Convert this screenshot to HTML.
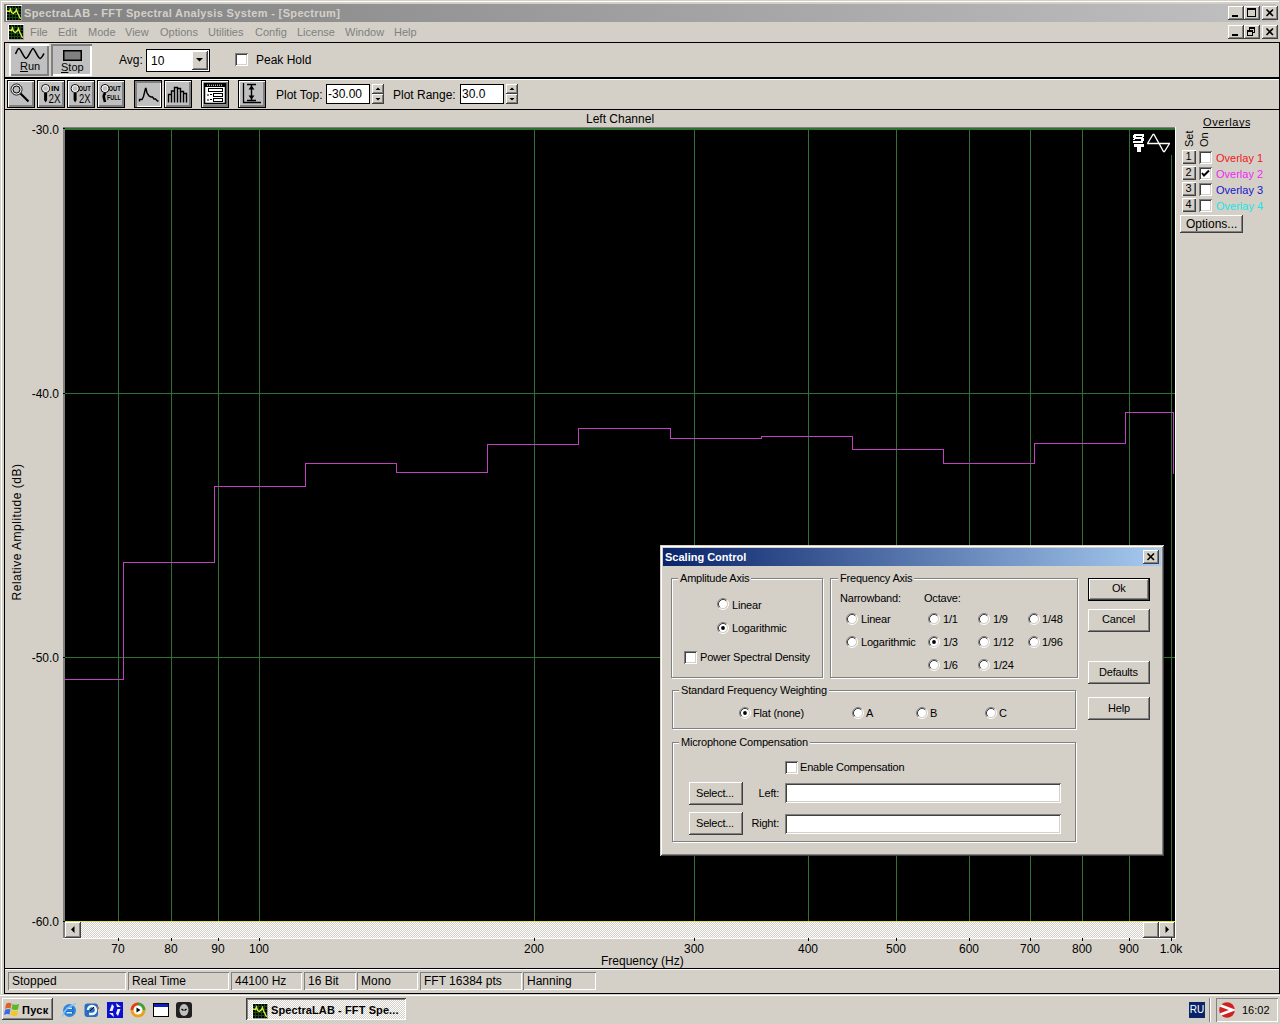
<!DOCTYPE html>
<html><head><meta charset="utf-8"><style>
html,body{margin:0;padding:0}
body{width:1280px;height:1024px;background:#D4D0C8;position:relative;overflow:hidden;font-family:"Liberation Sans",sans-serif;font-size:11px;color:#000}
body>div,body>svg{position:absolute}
.t{position:absolute;white-space:nowrap;font-size:11px;line-height:13px}
</style></head><body>
<div style="left:1px;top:1px;width:1278px;height:1px;background:#fff"></div>
<div style="left:1px;top:1px;width:1px;height:993px;background:#fff"></div>
<div style="left:4px;top:4px;width:1272px;height:18px;background:linear-gradient(90deg,#808080,#C0C0C0)"></div>
<svg style="left:6px;top:5px" width="16" height="16" viewBox="0 0 16 16"><rect x="0" y="0" width="16" height="16" fill="#a0a0a0"/><path d="M0.5 16 V0.5 H16" stroke="#fff" stroke-width="1" fill="none"/><rect x="1" y="1" width="14" height="14" fill="#000"/><path d="M1 3.5H15M1 6.5H15M1 9.5H15M1 12.5H15M3.5 1V15M6.5 1V15M9.5 1V15M12.5 1V15" stroke="#124c12" stroke-width="1"/><path d="M1 6 L3.5 6.5 L4.5 4 L5.5 7.5 L7.5 8.5 L9.5 6.5 L10.5 4.5 L11.5 8 L13 10.5 L14.5 14" stroke="#e0f040" stroke-width="1.3" fill="none"/></svg>
<div class="t" style="left:24px;top:7px;font-weight:bold;color:#D4D0C8;letter-spacing:0.35px">SpectraLAB - FFT Spectral Analysis System - [Spectrum]</div>
<div style="left:1228px;top:6px;width:16px;height:14px;background:#D4D0C8;box-shadow:inset -1px -1px #404040,inset 1px 1px #fff,inset -2px -2px #808080;"></div>
<div style="left:1232px;top:15px;width:6px;height:2px;background:#000"></div>
<div style="left:1244px;top:6px;width:16px;height:14px;background:#D4D0C8;box-shadow:inset -1px -1px #404040,inset 1px 1px #fff,inset -2px -2px #808080;"></div>
<div style="left:1247px;top:8px;width:9px;height:9px;border:1px solid #000;border-top-width:2px;box-sizing:border-box"></div>
<div style="left:1262px;top:6px;width:16px;height:14px;background:#D4D0C8;box-shadow:inset -1px -1px #404040,inset 1px 1px #fff,inset -2px -2px #808080;"></div>
<svg style="left:1262px;top:6px" width="16" height="14"><path d="M4.5 3.5 L11 10 M11 3.5 L4.5 10" stroke="#000" stroke-width="1.6"/></svg>
<svg style="left:8px;top:24px" width="16" height="16" viewBox="0 0 16 16"><rect x="0" y="0" width="16" height="16" fill="#a0a0a0"/><path d="M0.5 16 V0.5 H16" stroke="#fff" stroke-width="1" fill="none"/><rect x="1" y="1" width="14" height="14" fill="#000"/><path d="M1 3.5H15M1 6.5H15M1 9.5H15M1 12.5H15M3.5 1V15M6.5 1V15M9.5 1V15M12.5 1V15" stroke="#124c12" stroke-width="1"/><path d="M1 6 L3.5 6.5 L4.5 4 L5.5 7.5 L7.5 8.5 L9.5 6.5 L10.5 4.5 L11.5 8 L13 10.5 L14.5 14" stroke="#e0f040" stroke-width="1.3" fill="none"/></svg>
<div class="t" style="left:30px;top:26px;color:#808080">File</div>
<div class="t" style="left:58px;top:26px;color:#808080">Edit</div>
<div class="t" style="left:88px;top:26px;color:#808080">Mode</div>
<div class="t" style="left:125px;top:26px;color:#808080">View</div>
<div class="t" style="left:160px;top:26px;color:#808080">Options</div>
<div class="t" style="left:208px;top:26px;color:#808080">Utilities</div>
<div class="t" style="left:255px;top:26px;color:#808080">Config</div>
<div class="t" style="left:297px;top:26px;color:#808080">License</div>
<div class="t" style="left:345px;top:26px;color:#808080">Window</div>
<div class="t" style="left:394px;top:26px;color:#808080">Help</div>
<div style="left:1228px;top:25px;width:16px;height:14px;background:#D4D0C8;box-shadow:inset -1px -1px #404040,inset 1px 1px #fff,inset -2px -2px #808080;"></div>
<div style="left:1232px;top:34px;width:6px;height:2px;background:#000"></div>
<div style="left:1244px;top:25px;width:16px;height:14px;background:#D4D0C8;box-shadow:inset -1px -1px #404040,inset 1px 1px #fff,inset -2px -2px #808080;"></div>
<div style="left:1249px;top:27px;width:6px;height:6px;border:1px solid #000;border-top-width:2px;box-sizing:border-box"></div>
<div style="left:1247px;top:30px;width:6px;height:6px;border:1px solid #000;border-top-width:2px;box-sizing:border-box;background:#D4D0C8"></div>
<div style="left:1262px;top:25px;width:16px;height:14px;background:#D4D0C8;box-shadow:inset -1px -1px #404040,inset 1px 1px #fff,inset -2px -2px #808080;"></div>
<svg style="left:1262px;top:25px" width="16" height="14"><path d="M4.5 3.5 L11 10 M11 3.5 L4.5 10" stroke="#000" stroke-width="1.6"/></svg>
<div style="left:4px;top:42px;width:1276px;height:1px;background:#000"></div>
<div style="left:4px;top:42px;width:1px;height:952px;background:#000"></div>
<div style="left:1279px;top:42px;width:1px;height:952px;background:#000"></div>
<div style="left:4px;top:77px;width:1276px;height:1px;background:#000"></div>
<div style="left:4px;top:78px;width:1276px;height:1px;background:#000"></div>
<div style="left:4px;top:109px;width:1276px;height:1px;background:#000"></div>
<div style="left:4px;top:968px;width:1276px;height:1px;background:#000"></div>
<div style="left:4px;top:993px;width:1276px;height:1px;background:#000"></div>
<div style="left:5px;top:79px;width:1274px;height:1px;background:#fff"></div>
<div style="left:5px;top:969px;width:1274px;height:1px;background:#fff"></div>
<div style="left:9px;top:44px;width:40px;height:32px;background:#C0C0C0;box-shadow:inset 2px 2px #fff,inset -2px -2px #808080"></div>
<svg style="left:0;top:0" width="60" height="70"><path d="M15.5 54 C16.5 52 17.5 48.5 19 48.5 C20.5 48.5 24 58.5 26 58.5 C28 58.5 31.5 48.5 33 48.5 C34.5 48.5 38 58.5 40 58.5 C41.5 58.5 43 55 44 53.5" stroke="#000" stroke-width="1.5" fill="none"/></svg>
<div class="t" style="left:20px;top:60px;font-size:11px"><u>R</u>un</div>
<div style="left:51px;top:44px;width:41px;height:32px;background:#C0C0C0;box-shadow:inset 2px 2px #808080,inset -2px -2px #fff"></div>
<div style="left:63px;top:50px;width:19px;height:11px;background:#808080;border:1px solid #000;box-sizing:border-box;box-shadow:inset 0 0 0 0.5px #000"></div>
<div class="t" style="left:61px;top:61px;"><u>S</u>top</div>
<div class="t" style="left:119px;top:53px;font-size:12px;line-height:14px">Avg:</div>
<div style="left:146px;top:49px;width:64px;height:23px;background:#fff;border:1px solid #000;box-sizing:border-box"></div>
<div class="t" style="left:151px;top:54px;font-size:12px;line-height:14px">10</div>
<div style="left:192px;top:51px;width:16px;height:19px;background:#D4D0C8;box-shadow:inset -1px -1px #404040,inset 1px 1px #fff,inset -2px -2px #808080;"></div>
<svg style="left:192px;top:51px" width="16" height="19"><path d="M4 7 L11 7 L7.5 10.5 Z" fill="#000"/></svg>
<div style="left:235px;top:53px;width:13px;height:13px;background:#fff;box-shadow:inset 1px 1px #808080,inset -1px -1px #fff,inset 2px 2px #404040,inset -2px -2px #D4D0C8;"></div>
<div class="t" style="left:256px;top:53px;font-size:12px;line-height:14px">Peak Hold</div>
<div style="left:7px;top:80px;width:28px;height:28px;background:#000"></div>
<div style="left:8px;top:81px;width:26px;height:26px;background:#C0C0C0;box-shadow:inset 1px 1px #fff,inset -2px -2px #808080"></div>
<div style="left:37px;top:80px;width:28px;height:28px;background:#000"></div>
<div style="left:38px;top:81px;width:26px;height:26px;background:#C0C0C0;box-shadow:inset 1px 1px #fff,inset -2px -2px #808080"></div>
<div style="left:67px;top:80px;width:28px;height:28px;background:#000"></div>
<div style="left:68px;top:81px;width:26px;height:26px;background:#C0C0C0;box-shadow:inset 1px 1px #fff,inset -2px -2px #808080"></div>
<div style="left:97px;top:80px;width:28px;height:28px;background:#000"></div>
<div style="left:98px;top:81px;width:26px;height:26px;background:#C0C0C0;box-shadow:inset 1px 1px #fff,inset -2px -2px #808080"></div>
<div style="left:134px;top:80px;width:28px;height:28px;background:#000"></div>
<div style="left:135px;top:81px;width:26px;height:26px;background:#C0C0C0;box-shadow:inset 2px 2px #808080,inset -1px -1px #fff"></div>
<div style="left:164px;top:80px;width:28px;height:28px;background:#000"></div>
<div style="left:165px;top:81px;width:26px;height:26px;background:#C0C0C0;box-shadow:inset 1px 1px #fff,inset -2px -2px #808080"></div>
<div style="left:201px;top:80px;width:28px;height:28px;background:#000"></div>
<div style="left:202px;top:81px;width:26px;height:26px;background:#C0C0C0;box-shadow:inset 1px 1px #fff,inset -2px -2px #808080"></div>
<div style="left:238px;top:80px;width:28px;height:28px;background:#000"></div>
<div style="left:239px;top:81px;width:26px;height:26px;background:#C0C0C0;box-shadow:inset 1px 1px #fff,inset -2px -2px #808080"></div>
<svg style="left:7px;top:80px" width="28" height="28"><circle cx="9.5" cy="9.5" r="5.5" stroke="#000" stroke-width="1" fill="none"/><circle cx="9.5" cy="9.5" r="4.5" stroke="#fff" stroke-width="1" fill="none"/><circle cx="9.5" cy="9.5" r="3.5" stroke="#000" stroke-width="1" fill="none"/><path d="M13.5 13.5 L21.5 21.5" stroke="#000" stroke-width="2.2"/></svg>
<svg style="left:37px;top:80px" width="28" height="28"><circle cx="8.6" cy="8.5" r="4" stroke="#000" stroke-width="1" fill="none"/><circle cx="8.6" cy="8.5" r="3" stroke="#fff" stroke-width="1" fill="none"/><path d="M7.1 13 H10.1 V20 L8.6 22.5 L7.1 20Z" fill="#000"/><text x="11.5" y="23" font-family="Liberation Sans" font-size="12" textLength="12" lengthAdjust="spacingAndGlyphs">2X</text><text x="14" y="10.8" font-family="Liberation Sans" font-weight="bold" font-size="7" textLength="8.5" lengthAdjust="spacingAndGlyphs">IN</text></svg>
<svg style="left:67px;top:80px" width="28" height="28"><circle cx="8.1" cy="8.5" r="4" stroke="#000" stroke-width="1" fill="none"/><circle cx="8.1" cy="8.5" r="3" stroke="#fff" stroke-width="1" fill="none"/><path d="M6.6 13 H9.6 V20 L8.1 22.5 L6.6 20Z" fill="#000"/><text x="12" y="23" font-family="Liberation Sans" font-size="12" textLength="11.5" lengthAdjust="spacingAndGlyphs">2X</text><text x="11.5" y="10.8" font-family="Liberation Sans" font-weight="bold" font-size="7" textLength="12.3" lengthAdjust="spacingAndGlyphs">OUT</text></svg>
<svg style="left:97px;top:80px" width="28" height="28"><circle cx="8" cy="8.5" r="4" stroke="#000" stroke-width="1" fill="none"/><circle cx="8" cy="8.5" r="3" stroke="#fff" stroke-width="1" fill="none"/><path d="M8.5 13 Q6 15 7 18 L8 22" stroke="#000" stroke-width="2.6" fill="none"/><text x="10" y="19.8" font-family="Liberation Sans" font-weight="bold" font-size="7" textLength="13.8" lengthAdjust="spacingAndGlyphs">FULL</text><text x="11.5" y="10.8" font-family="Liberation Sans" font-weight="bold" font-size="7" textLength="12.3" lengthAdjust="spacingAndGlyphs">OUT</text></svg>
<svg style="left:134px;top:80px" width="28" height="28"><path d="M5.5 21.5 V19.5 H8 L9.5 16.5 L11.5 8.5 L12 8.5 L13 13 L15 16 L17 17 H18.5 L20 19 H21.5 L23.5 21 H24.5" stroke="#000" stroke-width="1.4" fill="none"/></svg>
<svg style="left:164px;top:80px" width="28" height="28"><path d="M4.5 22.5 V14.5 H7.5 V11 H10.5 V7.5 H13.5 V8.5 H16.5 V11.5 H19.5 V13.5 H22.5 V22.5 M7.5 14.5 V22.5 M10.5 11 V22.5 M13.5 8.5 V22.5 M16.5 11.5 V22.5 M19.5 13.5 V22.5" stroke="#000" stroke-width="1.4" fill="none"/></svg>
<svg style="left:201px;top:80px" width="28" height="28"><rect x="3.5" y="3.5" width="21" height="20" fill="#fff" stroke="#000" stroke-width="1.5"/><rect x="3.5" y="3.5" width="21" height="3.5" fill="#000"/><path d="M6 5.2 H22" stroke="#fff" stroke-width="1" stroke-dasharray="1 1"/><rect x="7.5" y="8.5" width="14" height="3" fill="none" stroke="#000"/><rect x="12.5" y="13.5" width="9" height="3" fill="none" stroke="#000"/><rect x="12.5" y="18.5" width="9" height="3" fill="none" stroke="#000"/><path d="M6 15 H8 M9 14.5 H11 M6 20 H8 M9 19.5 H11" stroke="#000" stroke-width="1.2"/></svg>
<svg style="left:238px;top:80px" width="28" height="28"><path d="M5.5 3 V22.5 H23" stroke="#000" stroke-width="1.3" fill="none"/><path d="M9 4.5 H18 M9 20.5 H18 M13.5 5 V20" stroke="#000" stroke-width="1.4"/><path d="M10.5 9.5 L13.5 5.5 L16.5 9.5Z M10.5 15.5 L13.5 19.5 L16.5 15.5Z" fill="#000"/></svg>
<div class="t" style="left:276px;top:88px;font-size:12px;line-height:14px">Plot Top:</div>
<div style="left:326px;top:84px;width:44px;height:20px;background:#fff;border:1px solid #000;box-sizing:border-box"></div>
<div class="t" style="left:328px;top:87px;font-size:12px;line-height:14px">-30.00</div>
<div style="left:372px;top:84px;width:12px;height:10px;background:#D4D0C8;box-shadow:inset -1px -1px #404040,inset 1px 1px #fff,inset -2px -2px #808080;"></div>
<div style="left:372px;top:94px;width:12px;height:10px;background:#D4D0C8;box-shadow:inset -1px -1px #404040,inset 1px 1px #fff,inset -2px -2px #808080;"></div>
<svg style="left:372px;top:84px" width="12" height="20"><path d="M3.5 6 L8.5 6 L6 3.5Z M3.5 14 L8.5 14 L6 16.5Z" fill="#000"/></svg>
<div class="t" style="left:393px;top:88px;font-size:12px;line-height:14px">Plot Range:</div>
<div style="left:460px;top:84px;width:44px;height:20px;background:#fff;border:1px solid #000;box-sizing:border-box"></div>
<div class="t" style="left:462px;top:87px;font-size:12px;line-height:14px">30.0</div>
<div style="left:506px;top:84px;width:12px;height:10px;background:#D4D0C8;box-shadow:inset -1px -1px #404040,inset 1px 1px #fff,inset -2px -2px #808080;"></div>
<div style="left:506px;top:94px;width:12px;height:10px;background:#D4D0C8;box-shadow:inset -1px -1px #404040,inset 1px 1px #fff,inset -2px -2px #808080;"></div>
<svg style="left:506px;top:84px" width="12" height="20"><path d="M3.5 6 L8.5 6 L6 3.5Z M3.5 14 L8.5 14 L6 16.5Z" fill="#000"/></svg>
<div style="left:63px;top:127px;width:2px;height:812px;background:#808080"></div>
<div style="left:63px;top:127px;width:1113px;height:1px;background:#808080"></div>
<div style="left:1175px;top:127px;width:1px;height:812px;background:#fff"></div>
<div style="left:63px;top:938px;width:1113px;height:1px;background:#fff"></div>
<div style="left:65px;top:128px;width:1110px;height:793px;background:#000"></div>
<div style="left:118px;top:128px;width:1px;height:793px;background:#307030"></div>
<div style="left:171px;top:128px;width:1px;height:793px;background:#307030"></div>
<div style="left:218px;top:128px;width:1px;height:793px;background:#307030"></div>
<div style="left:259px;top:128px;width:1px;height:793px;background:#307030"></div>
<div style="left:534px;top:128px;width:1px;height:793px;background:#307030"></div>
<div style="left:694px;top:128px;width:1px;height:793px;background:#307030"></div>
<div style="left:808px;top:128px;width:1px;height:793px;background:#307030"></div>
<div style="left:896px;top:128px;width:1px;height:793px;background:#307030"></div>
<div style="left:969px;top:128px;width:1px;height:793px;background:#307030"></div>
<div style="left:1030px;top:128px;width:1px;height:793px;background:#307030"></div>
<div style="left:1082px;top:128px;width:1px;height:793px;background:#307030"></div>
<div style="left:1129px;top:128px;width:1px;height:793px;background:#307030"></div>
<div style="left:1171px;top:128px;width:1px;height:793px;background:#307030"></div>
<div style="left:65px;top:128px;width:1110px;height:1px;background:#307030"></div>
<div style="left:65px;top:129px;width:1110px;height:1px;background:#307030"></div>
<div style="left:65px;top:393px;width:1110px;height:1px;background:#307030"></div>
<div style="left:65px;top:657px;width:1110px;height:1px;background:#307030"></div>
<div style="left:65px;top:921px;width:1110px;height:1px;background:#e0e040"></div>
<div style="left:63px;top:128px;width:2px;height:1px;background:#000"></div>
<div style="left:63px;top:393px;width:2px;height:1px;background:#000"></div>
<div style="left:63px;top:657px;width:2px;height:1px;background:#000"></div>
<div style="left:63px;top:921px;width:2px;height:1px;background:#000"></div>
<div style="left:118px;top:938px;width:1px;height:3px;background:#000"></div>
<div style="left:171px;top:938px;width:1px;height:3px;background:#000"></div>
<div style="left:218px;top:938px;width:1px;height:3px;background:#000"></div>
<div style="left:259px;top:938px;width:1px;height:3px;background:#000"></div>
<div style="left:534px;top:938px;width:1px;height:3px;background:#000"></div>
<div style="left:694px;top:938px;width:1px;height:3px;background:#000"></div>
<div style="left:808px;top:938px;width:1px;height:3px;background:#000"></div>
<div style="left:896px;top:938px;width:1px;height:3px;background:#000"></div>
<div style="left:969px;top:938px;width:1px;height:3px;background:#000"></div>
<div style="left:1030px;top:938px;width:1px;height:3px;background:#000"></div>
<div style="left:1082px;top:938px;width:1px;height:3px;background:#000"></div>
<div style="left:1129px;top:938px;width:1px;height:3px;background:#000"></div>
<div style="left:1171px;top:938px;width:1px;height:3px;background:#000"></div>
<div style="left:65px;top:922px;width:1110px;height:16px;background-color:#D4D0C8;background-image:repeating-conic-gradient(#fff 0 25%,#D4D0C8 0 50%);background-size:2px 2px"></div>
<div style="left:65px;top:922px;width:16px;height:16px;background:#D4D0C8;box-shadow:inset -1px -1px #404040,inset 1px 1px #fff,inset -2px -2px #808080;"></div>
<svg style="left:65px;top:922px" width="16" height="16"><path d="M9.5 4 L9.5 11 L6 7.5Z" fill="#000"/></svg>
<div style="left:1143px;top:922px;width:16px;height:16px;background:#D4D0C8;box-shadow:inset -1px -1px #404040,inset 1px 1px #fff,inset -2px -2px #808080;"></div>
<div style="left:1159px;top:922px;width:16px;height:16px;background:#D4D0C8;box-shadow:inset -1px -1px #404040,inset 1px 1px #fff,inset -2px -2px #808080;"></div>
<svg style="left:1159px;top:922px" width="16" height="16"><path d="M6.5 4 L6.5 11 L10 7.5Z" fill="#000"/></svg>
<svg style="left:0;top:0" width="1280" height="1024"><path d="M65 679.5 L123.5 679.5 L123.5 562.5 L214.5 562.5 L214.5 486.5 L305.5 486.5 L305.5 463.5 L396.5 463.5 L396.5 472.5 L487.5 472.5 L487.5 444.5 L578.5 444.5 L578.5 428.5 L670.5 428.5 L670.5 438.5 L761.5 438.5 L761.5 436.5 L852.5 436.5 L852.5 449.5 L943.5 449.5 L943.5 463.5 L1034.5 463.5 L1034.5 443.5 L1125.5 443.5 L1125.5 412.5 L1173.5 412.5 L1173.5 474" stroke="#c040c0" stroke-width="1" fill="none" shape-rendering="crispEdges"/></svg>
<div style="left:1130px;top:130px;width:45px;height:25px;background:#000"></div>
<div style="left:1134px;top:134px;width:10px;height:2px;background:#fff"></div>
<div style="left:1133px;top:135px;width:3px;height:3px;background:#fff"></div>
<div style="left:1134px;top:137px;width:9px;height:2px;background:#fff"></div>
<div style="left:1141px;top:138px;width:3px;height:3px;background:#fff"></div>
<div style="left:1133px;top:141px;width:10px;height:2px;background:#fff"></div>
<div style="left:1142px;top:136px;width:2px;height:1px;background:#fff"></div>
<div style="left:1133px;top:139px;width:2px;height:1px;background:#fff"></div>
<div style="left:1134px;top:144px;width:10px;height:3px;background:#fff"></div>
<div style="left:1137px;top:147px;width:4px;height:5px;background:#fff"></div>
<svg style="left:0;top:0" width="1280" height="200"><path d="M1147 143.5 H1170 M1147.5 143.5 L1153 134.5 L1154 134.5 L1163.5 151.5 L1164.5 151.5 L1169.5 143.5" stroke="#fff" stroke-width="1.3" fill="none"/></svg>
<div class="t" style="left:20px;width:39px;text-align:right;top:123px;font-size:12px;line-height:14px">-30.0</div>
<div class="t" style="left:20px;width:39px;text-align:right;top:387px;font-size:12px;line-height:14px">-40.0</div>
<div class="t" style="left:20px;width:39px;text-align:right;top:651px;font-size:12px;line-height:14px">-50.0</div>
<div class="t" style="left:20px;width:39px;text-align:right;top:915px;font-size:12px;line-height:14px">-60.0</div>
<div class="t" style="left:88px;width:60px;text-align:center;top:942px;font-size:12px;line-height:14px">70</div>
<div class="t" style="left:141px;width:60px;text-align:center;top:942px;font-size:12px;line-height:14px">80</div>
<div class="t" style="left:188px;width:60px;text-align:center;top:942px;font-size:12px;line-height:14px">90</div>
<div class="t" style="left:229px;width:60px;text-align:center;top:942px;font-size:12px;line-height:14px">100</div>
<div class="t" style="left:504px;width:60px;text-align:center;top:942px;font-size:12px;line-height:14px">200</div>
<div class="t" style="left:664px;width:60px;text-align:center;top:942px;font-size:12px;line-height:14px">300</div>
<div class="t" style="left:778px;width:60px;text-align:center;top:942px;font-size:12px;line-height:14px">400</div>
<div class="t" style="left:866px;width:60px;text-align:center;top:942px;font-size:12px;line-height:14px">500</div>
<div class="t" style="left:939px;width:60px;text-align:center;top:942px;font-size:12px;line-height:14px">600</div>
<div class="t" style="left:1000px;width:60px;text-align:center;top:942px;font-size:12px;line-height:14px">700</div>
<div class="t" style="left:1052px;width:60px;text-align:center;top:942px;font-size:12px;line-height:14px">800</div>
<div class="t" style="left:1099px;width:60px;text-align:center;top:942px;font-size:12px;line-height:14px">900</div>
<div class="t" style="left:1141px;width:60px;text-align:center;top:942px;font-size:12px;line-height:14px">1.0k</div>
<div class="t" style="left:586px;top:112px;font-size:12px;line-height:14px">Left Channel</div>
<div class="t" style="left:601px;top:954px;font-size:12px;line-height:14px">Frequency (Hz)</div>
<div class="t" style="left:17px;top:532px;font-size:12px;letter-spacing:0.5px;transform:translate(-50%,-50%) rotate(-90deg);transform-origin:center">Relative Amplitude (dB)</div>
<div class="t" style="left:1203px;top:116px;letter-spacing:0.6px">Overlays</div>
<div style="left:1203px;top:127px;width:47px;height:1px;background:#000"></div>
<div class="t" style="left:1184px;top:131px;width:13px;height:16px"><div style="position:absolute;left:0;top:0;transform:translate(-1px,16px) rotate(-90deg);transform-origin:0 0">Set</div></div>
<div class="t" style="left:1198px;top:131px;width:13px;height:16px"><div style="position:absolute;left:0;top:0;transform:translate(0px,16px) rotate(-90deg);transform-origin:0 0">On</div></div>
<div style="left:1182px;top:150px;width:14px;height:14px;background:#D4D0C8;box-shadow:inset 1px 1px #fff,inset -1px -1px #404040,inset -2px -2px #808080"></div>
<div class="t" style="left:1182px;width:13px;text-align:center;top:150px">1</div>
<div style="left:1199px;top:151px;width:13px;height:13px;background:#fff;box-shadow:inset 1px 1px #808080,inset -1px -1px #fff,inset 2px 2px #404040,inset -2px -2px #D4D0C8;"></div>
<div class="t" style="left:1216px;top:152px;color:#f01818">Overlay 1</div>
<div style="left:1182px;top:166px;width:14px;height:14px;background:#D4D0C8;box-shadow:inset 1px 1px #fff,inset -1px -1px #404040,inset -2px -2px #808080"></div>
<div class="t" style="left:1182px;width:13px;text-align:center;top:166px">2</div>
<div style="left:1199px;top:167px;width:13px;height:13px;background:#fff;box-shadow:inset 1px 1px #808080,inset -1px -1px #fff,inset 2px 2px #404040,inset -2px -2px #D4D0C8;"></div>
<svg style="left:1199px;top:167px" width="13" height="13"><path d="M3 6 L5 8.5 L10 3.5" stroke="#000" stroke-width="2" fill="none"/></svg>
<div class="t" style="left:1216px;top:168px;color:#f028f0">Overlay 2</div>
<div style="left:1182px;top:182px;width:14px;height:14px;background:#D4D0C8;box-shadow:inset 1px 1px #fff,inset -1px -1px #404040,inset -2px -2px #808080"></div>
<div class="t" style="left:1182px;width:13px;text-align:center;top:182px">3</div>
<div style="left:1199px;top:183px;width:13px;height:13px;background:#fff;box-shadow:inset 1px 1px #808080,inset -1px -1px #fff,inset 2px 2px #404040,inset -2px -2px #D4D0C8;"></div>
<div class="t" style="left:1216px;top:184px;color:#1414c8">Overlay 3</div>
<div style="left:1182px;top:198px;width:14px;height:14px;background:#D4D0C8;box-shadow:inset 1px 1px #fff,inset -1px -1px #404040,inset -2px -2px #808080"></div>
<div class="t" style="left:1182px;width:13px;text-align:center;top:198px">4</div>
<div style="left:1199px;top:199px;width:13px;height:13px;background:#fff;box-shadow:inset 1px 1px #808080,inset -1px -1px #fff,inset 2px 2px #404040,inset -2px -2px #D4D0C8;"></div>
<div class="t" style="left:1216px;top:200px;color:#20e4e4">Overlay 4</div>
<div style="left:1180px;top:215px;width:63px;height:18px;background:#D4D0C8;box-shadow:inset -1px -1px #404040,inset 1px 1px #fff,inset -2px -2px #808080;"></div>
<div class="t" style="left:1186px;top:217px;font-size:12px;line-height:14px">Options...</div>
<div style="left:8px;top:972px;width:118px;height:18px;box-shadow:inset 1px 1px #808080,inset -1px -1px #fff"></div>
<div class="t" style="left:12px;top:974px;font-size:12px;line-height:14px">Stopped</div>
<div style="left:128px;top:972px;width:101px;height:18px;box-shadow:inset 1px 1px #808080,inset -1px -1px #fff"></div>
<div class="t" style="left:132px;top:974px;font-size:12px;line-height:14px">Real Time</div>
<div style="left:231px;top:972px;width:71px;height:18px;box-shadow:inset 1px 1px #808080,inset -1px -1px #fff"></div>
<div class="t" style="left:235px;top:974px;font-size:12px;line-height:14px">44100 Hz</div>
<div style="left:304px;top:972px;width:52px;height:18px;box-shadow:inset 1px 1px #808080,inset -1px -1px #fff"></div>
<div class="t" style="left:308px;top:974px;font-size:12px;line-height:14px">16 Bit</div>
<div style="left:357px;top:972px;width:61px;height:18px;box-shadow:inset 1px 1px #808080,inset -1px -1px #fff"></div>
<div class="t" style="left:361px;top:974px;font-size:12px;line-height:14px">Mono</div>
<div style="left:420px;top:972px;width:102px;height:18px;box-shadow:inset 1px 1px #808080,inset -1px -1px #fff"></div>
<div class="t" style="left:424px;top:974px;font-size:12px;line-height:14px">FFT 16384 pts</div>
<div style="left:523px;top:972px;width:73px;height:18px;box-shadow:inset 1px 1px #808080,inset -1px -1px #fff"></div>
<div class="t" style="left:527px;top:974px;font-size:12px;line-height:14px">Hanning</div>
<div style="left:0px;top:995px;width:1280px;height:1px;background:#fff"></div>
<div style="left:2px;top:998px;width:51px;height:22px;background:#D4D0C8;box-shadow:inset -1px -1px #404040,inset 1px 1px #fff,inset -2px -2px #808080;"></div>
<svg style="left:4px;top:1001px" width="17" height="16"><path d="M2 3 Q4 1 7.5 2.5 L6.5 7.5 Q3.5 6.5 1 8Z" fill="#e0602a"/><path d="M8.5 3 Q11 4.5 15 3 L14 8.5 Q11 9.5 7.5 8Z" fill="#5ab82a"/><path d="M1 9 Q3.5 7.5 6.5 8.5 L5.5 13.5 Q3 12.5 0 14Z" fill="#3a6ee0"/><path d="M7.5 9 Q10.5 10.5 14 9.5 L13 14.5 Q10 15.5 6.5 14Z" fill="#f0c820"/></svg>
<div class="t" style="left:22px;top:1004px;font-weight:bold;font-size:11px;letter-spacing:0.3px">Пуск</div>
<svg style="left:61px;top:1002px" width="16" height="16"><circle cx="8.5" cy="8.5" r="6.5" fill="#2f86e0"/><circle cx="8.5" cy="8.5" r="4" fill="#1a5cb0"/><rect x="5.5" y="5.5" width="5.5" height="1.6" fill="#d8ecff"/><rect x="5.5" y="10" width="5.5" height="1.6" fill="#d8ecff"/><rect x="4.5" y="7.6" width="8" height="1.8" fill="#2f86e0"/><path d="M1.5 14.5 Q3 6 15 1.5" stroke="#8cc8f4" stroke-width="1.6" fill="none"/></svg>
<svg style="left:84px;top:1003px" width="16" height="16"><rect x="0.5" y="0.5" width="13.5" height="13.5" rx="3" fill="#2a6cc0"/><path d="M4 7 A4 4 0 1 1 8 11 L5 11" stroke="#f0f8ff" stroke-width="2.4" fill="none"/><path d="M6 8 L10 4" stroke="#000" stroke-width="1"/><circle cx="14" cy="5" r="1.2" fill="#d06040"/></svg>
<svg style="left:107px;top:1002px" width="16" height="16"><rect x="0" y="0" width="16" height="16" fill="#0a10d0"/><path d="M2.5 9 L5 2 L7 4.5 L5.5 9Z M13.5 7 L11 14 L9 11.5 L10.5 7Z M2 11 L7 15 L6 11Z M14 5 L9 1 L10 5Z" fill="#f0f0f0"/></svg>
<svg style="left:130px;top:1002px" width="16" height="16"><circle cx="8" cy="8" r="7.5" fill="#e8a020"/><path d="M8 0.5 A7.5 7.5 0 0 1 15.5 8 L8 8Z" fill="#40a040"/><path d="M0.5 8 A7.5 7.5 0 0 1 8 0.5 L8 8Z" fill="#e04020"/><circle cx="8" cy="8" r="4.5" fill="#fff"/><path d="M6.5 5.5 L10.5 8 L6.5 10.5Z" fill="#000"/></svg>
<svg style="left:153px;top:1002px" width="16" height="16"><rect x="0.5" y="1.5" width="15" height="13" fill="#fff" stroke="#000"/><rect x="1" y="2" width="14" height="3" fill="#1020c0"/></svg>
<svg style="left:176px;top:1002px" width="16" height="16"><rect x="0" y="0" width="16" height="16" rx="3" fill="#202020"/><ellipse cx="8" cy="8" rx="4.5" ry="6" fill="#c0c0c0"/><path d="M5.5 7 L7.5 8.5 M10.5 7 L8.5 8.5" stroke="#000" stroke-width="1.5"/></svg>
<div style="left:246px;top:998px;width:160px;height:22px;background-color:#fff;background-image:repeating-conic-gradient(#D4D0C8 0 25%,#fff 0 50%);background-size:2px 2px;box-shadow:inset 1px 1px #404040,inset -1px -1px #fff,inset 2px 2px #808080"></div>
<svg style="left:252px;top:1003px" width="16" height="16" viewBox="0 0 16 16"><rect x="0" y="0" width="16" height="16" fill="#a0a0a0"/><path d="M0.5 16 V0.5 H16" stroke="#fff" stroke-width="1" fill="none"/><rect x="1" y="1" width="14" height="14" fill="#000"/><path d="M1 3.5H15M1 6.5H15M1 9.5H15M1 12.5H15M3.5 1V15M6.5 1V15M9.5 1V15M12.5 1V15" stroke="#124c12" stroke-width="1"/><path d="M1 6 L3.5 6.5 L4.5 4 L5.5 7.5 L7.5 8.5 L9.5 6.5 L10.5 4.5 L11.5 8 L13 10.5 L14.5 14" stroke="#e0f040" stroke-width="1.3" fill="none"/></svg>
<div class="t" style="left:271px;top:1004px;font-weight:bold;letter-spacing:0.1px">SpectraLAB - FFT Spe...</div>
<div style="left:1189px;top:1002px;width:16px;height:16px;background:#0A246A"></div>
<div class="t" style="left:1189px;top:1004px;width:16px;text-align:center;color:#fff;font-size:10px;line-height:12px">RU</div>
<div style="left:1209px;top:998px;width:1px;height:24px;background:#808080"></div>
<div style="left:1210px;top:998px;width:1px;height:24px;background:#fff"></div>
<div style="left:1216px;top:998px;width:62px;height:24px;box-shadow:inset 1px 1px #808080,inset -1px -1px #fff"></div>
<svg style="left:1219px;top:1002px" width="16" height="16"><circle cx="8" cy="8" r="7.8" fill="#d02020"/><path d="M1.5 3.5 L13.5 8 L1.5 12.5" stroke="#fff" stroke-width="2.6" fill="none"/></svg>
<div class="t" style="left:1242px;top:1004px;">16:02</div>
<div style="left:660px;top:545px;width:504px;height:311px;background:#D4D0C8;box-shadow:inset 1px 1px #D4D0C8,inset -1px -1px #404040,inset 2px 2px #fff,inset -2px -2px #808080"></div>
<div style="left:663px;top:548px;width:498px;height:18px;background:linear-gradient(90deg,#0A246A,#A6CAF0)"></div>
<div class="t" style="left:665px;top:551px;font-weight:bold;color:#fff">Scaling Control</div>
<div style="left:1143px;top:550px;width:16px;height:14px;background:#D4D0C8;box-shadow:inset -1px -1px #404040,inset 1px 1px #fff,inset -2px -2px #808080;"></div>
<svg style="left:1143px;top:550px" width="16" height="14"><path d="M4.5 3.5 L11 10 M11 3.5 L4.5 10" stroke="#000" stroke-width="1.6"/></svg>
<div style="left:672px;top:579px;width:152px;height:100px;border:1px solid #fff;box-sizing:border-box"></div>
<div style="left:671px;top:578px;width:152px;height:100px;border:1px solid #808080;box-sizing:border-box"></div>
<div class="t" style="left:678px;top:572px;padding:0 2px;background:#D4D0C8;letter-spacing:-0.2px">Amplitude Axis</div>
<svg style="left:717px;top:598px" width="12" height="12" viewBox="0 0 12 12"><circle cx="6" cy="6" r="4.2" fill="#fff"/><path d="M2.11 9.89 A5.5 5.5 0 0 1 9.89 2.11" stroke="#808080" fill="none" stroke-width="1"/><path d="M2.82 9.18 A4.5 4.5 0 0 1 9.18 2.82" stroke="#404040" fill="none" stroke-width="1"/><path d="M2.11 9.89 A5.5 5.5 0 0 0 9.89 2.11" stroke="#fff" fill="none" stroke-width="1"/><path d="M2.82 9.18 A4.5 4.5 0 0 0 9.18 2.82" stroke="#D4D0C8" fill="none" stroke-width="1"/></svg>
<div class="t" style="left:732px;top:599px;letter-spacing:-0.2px;">Linear</div>
<svg style="left:717px;top:622px" width="12" height="12" viewBox="0 0 12 12"><circle cx="6" cy="6" r="4.2" fill="#fff"/><path d="M2.11 9.89 A5.5 5.5 0 0 1 9.89 2.11" stroke="#808080" fill="none" stroke-width="1"/><path d="M2.82 9.18 A4.5 4.5 0 0 1 9.18 2.82" stroke="#404040" fill="none" stroke-width="1"/><path d="M2.11 9.89 A5.5 5.5 0 0 0 9.89 2.11" stroke="#fff" fill="none" stroke-width="1"/><path d="M2.82 9.18 A4.5 4.5 0 0 0 9.18 2.82" stroke="#D4D0C8" fill="none" stroke-width="1"/><circle cx="6" cy="6" r="1.9" fill="#000"/></svg>
<div class="t" style="left:732px;top:622px;letter-spacing:-0.2px;">Logarithmic</div>
<div style="left:684px;top:651px;width:13px;height:13px;background:#fff;box-shadow:inset 1px 1px #808080,inset -1px -1px #fff,inset 2px 2px #404040,inset -2px -2px #D4D0C8;"></div>
<div class="t" style="left:700px;top:651px;letter-spacing:-0.2px;">Power Spectral Density</div>
<div style="left:831px;top:579px;width:248px;height:100px;border:1px solid #fff;box-sizing:border-box"></div>
<div style="left:830px;top:578px;width:248px;height:100px;border:1px solid #808080;box-sizing:border-box"></div>
<div class="t" style="left:838px;top:572px;padding:0 2px;background:#D4D0C8;letter-spacing:-0.2px">Frequency Axis</div>
<div class="t" style="left:840px;top:592px;letter-spacing:-0.2px;">Narrowband:</div>
<div class="t" style="left:924px;top:592px;letter-spacing:-0.2px;">Octave:</div>
<svg style="left:846px;top:613px" width="12" height="12" viewBox="0 0 12 12"><circle cx="6" cy="6" r="4.2" fill="#fff"/><path d="M2.11 9.89 A5.5 5.5 0 0 1 9.89 2.11" stroke="#808080" fill="none" stroke-width="1"/><path d="M2.82 9.18 A4.5 4.5 0 0 1 9.18 2.82" stroke="#404040" fill="none" stroke-width="1"/><path d="M2.11 9.89 A5.5 5.5 0 0 0 9.89 2.11" stroke="#fff" fill="none" stroke-width="1"/><path d="M2.82 9.18 A4.5 4.5 0 0 0 9.18 2.82" stroke="#D4D0C8" fill="none" stroke-width="1"/></svg>
<div class="t" style="left:861px;top:613px;letter-spacing:-0.2px;">Linear</div>
<svg style="left:846px;top:636px" width="12" height="12" viewBox="0 0 12 12"><circle cx="6" cy="6" r="4.2" fill="#fff"/><path d="M2.11 9.89 A5.5 5.5 0 0 1 9.89 2.11" stroke="#808080" fill="none" stroke-width="1"/><path d="M2.82 9.18 A4.5 4.5 0 0 1 9.18 2.82" stroke="#404040" fill="none" stroke-width="1"/><path d="M2.11 9.89 A5.5 5.5 0 0 0 9.89 2.11" stroke="#fff" fill="none" stroke-width="1"/><path d="M2.82 9.18 A4.5 4.5 0 0 0 9.18 2.82" stroke="#D4D0C8" fill="none" stroke-width="1"/></svg>
<div class="t" style="left:861px;top:636px;letter-spacing:-0.2px;">Logarithmic</div>
<svg style="left:928px;top:613px" width="12" height="12" viewBox="0 0 12 12"><circle cx="6" cy="6" r="4.2" fill="#fff"/><path d="M2.11 9.89 A5.5 5.5 0 0 1 9.89 2.11" stroke="#808080" fill="none" stroke-width="1"/><path d="M2.82 9.18 A4.5 4.5 0 0 1 9.18 2.82" stroke="#404040" fill="none" stroke-width="1"/><path d="M2.11 9.89 A5.5 5.5 0 0 0 9.89 2.11" stroke="#fff" fill="none" stroke-width="1"/><path d="M2.82 9.18 A4.5 4.5 0 0 0 9.18 2.82" stroke="#D4D0C8" fill="none" stroke-width="1"/></svg>
<div class="t" style="left:943px;top:613px;letter-spacing:-0.2px;">1/1</div>
<svg style="left:978px;top:613px" width="12" height="12" viewBox="0 0 12 12"><circle cx="6" cy="6" r="4.2" fill="#fff"/><path d="M2.11 9.89 A5.5 5.5 0 0 1 9.89 2.11" stroke="#808080" fill="none" stroke-width="1"/><path d="M2.82 9.18 A4.5 4.5 0 0 1 9.18 2.82" stroke="#404040" fill="none" stroke-width="1"/><path d="M2.11 9.89 A5.5 5.5 0 0 0 9.89 2.11" stroke="#fff" fill="none" stroke-width="1"/><path d="M2.82 9.18 A4.5 4.5 0 0 0 9.18 2.82" stroke="#D4D0C8" fill="none" stroke-width="1"/></svg>
<div class="t" style="left:993px;top:613px;letter-spacing:-0.2px;">1/9</div>
<svg style="left:1028px;top:613px" width="12" height="12" viewBox="0 0 12 12"><circle cx="6" cy="6" r="4.2" fill="#fff"/><path d="M2.11 9.89 A5.5 5.5 0 0 1 9.89 2.11" stroke="#808080" fill="none" stroke-width="1"/><path d="M2.82 9.18 A4.5 4.5 0 0 1 9.18 2.82" stroke="#404040" fill="none" stroke-width="1"/><path d="M2.11 9.89 A5.5 5.5 0 0 0 9.89 2.11" stroke="#fff" fill="none" stroke-width="1"/><path d="M2.82 9.18 A4.5 4.5 0 0 0 9.18 2.82" stroke="#D4D0C8" fill="none" stroke-width="1"/></svg>
<div class="t" style="left:1042px;top:613px;letter-spacing:-0.2px;">1/48</div>
<svg style="left:928px;top:636px" width="12" height="12" viewBox="0 0 12 12"><circle cx="6" cy="6" r="4.2" fill="#fff"/><path d="M2.11 9.89 A5.5 5.5 0 0 1 9.89 2.11" stroke="#808080" fill="none" stroke-width="1"/><path d="M2.82 9.18 A4.5 4.5 0 0 1 9.18 2.82" stroke="#404040" fill="none" stroke-width="1"/><path d="M2.11 9.89 A5.5 5.5 0 0 0 9.89 2.11" stroke="#fff" fill="none" stroke-width="1"/><path d="M2.82 9.18 A4.5 4.5 0 0 0 9.18 2.82" stroke="#D4D0C8" fill="none" stroke-width="1"/><circle cx="6" cy="6" r="1.9" fill="#000"/></svg>
<div class="t" style="left:943px;top:636px;letter-spacing:-0.2px;">1/3</div>
<svg style="left:978px;top:636px" width="12" height="12" viewBox="0 0 12 12"><circle cx="6" cy="6" r="4.2" fill="#fff"/><path d="M2.11 9.89 A5.5 5.5 0 0 1 9.89 2.11" stroke="#808080" fill="none" stroke-width="1"/><path d="M2.82 9.18 A4.5 4.5 0 0 1 9.18 2.82" stroke="#404040" fill="none" stroke-width="1"/><path d="M2.11 9.89 A5.5 5.5 0 0 0 9.89 2.11" stroke="#fff" fill="none" stroke-width="1"/><path d="M2.82 9.18 A4.5 4.5 0 0 0 9.18 2.82" stroke="#D4D0C8" fill="none" stroke-width="1"/></svg>
<div class="t" style="left:993px;top:636px;letter-spacing:-0.2px;">1/12</div>
<svg style="left:1028px;top:636px" width="12" height="12" viewBox="0 0 12 12"><circle cx="6" cy="6" r="4.2" fill="#fff"/><path d="M2.11 9.89 A5.5 5.5 0 0 1 9.89 2.11" stroke="#808080" fill="none" stroke-width="1"/><path d="M2.82 9.18 A4.5 4.5 0 0 1 9.18 2.82" stroke="#404040" fill="none" stroke-width="1"/><path d="M2.11 9.89 A5.5 5.5 0 0 0 9.89 2.11" stroke="#fff" fill="none" stroke-width="1"/><path d="M2.82 9.18 A4.5 4.5 0 0 0 9.18 2.82" stroke="#D4D0C8" fill="none" stroke-width="1"/></svg>
<div class="t" style="left:1042px;top:636px;letter-spacing:-0.2px;">1/96</div>
<svg style="left:928px;top:659px" width="12" height="12" viewBox="0 0 12 12"><circle cx="6" cy="6" r="4.2" fill="#fff"/><path d="M2.11 9.89 A5.5 5.5 0 0 1 9.89 2.11" stroke="#808080" fill="none" stroke-width="1"/><path d="M2.82 9.18 A4.5 4.5 0 0 1 9.18 2.82" stroke="#404040" fill="none" stroke-width="1"/><path d="M2.11 9.89 A5.5 5.5 0 0 0 9.89 2.11" stroke="#fff" fill="none" stroke-width="1"/><path d="M2.82 9.18 A4.5 4.5 0 0 0 9.18 2.82" stroke="#D4D0C8" fill="none" stroke-width="1"/></svg>
<div class="t" style="left:943px;top:659px;letter-spacing:-0.2px;">1/6</div>
<svg style="left:978px;top:659px" width="12" height="12" viewBox="0 0 12 12"><circle cx="6" cy="6" r="4.2" fill="#fff"/><path d="M2.11 9.89 A5.5 5.5 0 0 1 9.89 2.11" stroke="#808080" fill="none" stroke-width="1"/><path d="M2.82 9.18 A4.5 4.5 0 0 1 9.18 2.82" stroke="#404040" fill="none" stroke-width="1"/><path d="M2.11 9.89 A5.5 5.5 0 0 0 9.89 2.11" stroke="#fff" fill="none" stroke-width="1"/><path d="M2.82 9.18 A4.5 4.5 0 0 0 9.18 2.82" stroke="#D4D0C8" fill="none" stroke-width="1"/></svg>
<div class="t" style="left:993px;top:659px;letter-spacing:-0.2px;">1/24</div>
<div style="left:673px;top:691px;width:404px;height:39px;border:1px solid #fff;box-sizing:border-box"></div>
<div style="left:672px;top:690px;width:404px;height:39px;border:1px solid #808080;box-sizing:border-box"></div>
<div class="t" style="left:679px;top:684px;padding:0 2px;background:#D4D0C8;letter-spacing:-0.2px">Standard Frequency Weighting</div>
<svg style="left:739px;top:707px" width="12" height="12" viewBox="0 0 12 12"><circle cx="6" cy="6" r="4.2" fill="#fff"/><path d="M2.11 9.89 A5.5 5.5 0 0 1 9.89 2.11" stroke="#808080" fill="none" stroke-width="1"/><path d="M2.82 9.18 A4.5 4.5 0 0 1 9.18 2.82" stroke="#404040" fill="none" stroke-width="1"/><path d="M2.11 9.89 A5.5 5.5 0 0 0 9.89 2.11" stroke="#fff" fill="none" stroke-width="1"/><path d="M2.82 9.18 A4.5 4.5 0 0 0 9.18 2.82" stroke="#D4D0C8" fill="none" stroke-width="1"/><circle cx="6" cy="6" r="1.9" fill="#000"/></svg>
<div class="t" style="left:753px;top:707px;letter-spacing:-0.2px;">Flat (none)</div>
<svg style="left:852px;top:707px" width="12" height="12" viewBox="0 0 12 12"><circle cx="6" cy="6" r="4.2" fill="#fff"/><path d="M2.11 9.89 A5.5 5.5 0 0 1 9.89 2.11" stroke="#808080" fill="none" stroke-width="1"/><path d="M2.82 9.18 A4.5 4.5 0 0 1 9.18 2.82" stroke="#404040" fill="none" stroke-width="1"/><path d="M2.11 9.89 A5.5 5.5 0 0 0 9.89 2.11" stroke="#fff" fill="none" stroke-width="1"/><path d="M2.82 9.18 A4.5 4.5 0 0 0 9.18 2.82" stroke="#D4D0C8" fill="none" stroke-width="1"/></svg>
<div class="t" style="left:866px;top:707px;letter-spacing:-0.2px;">A</div>
<svg style="left:916px;top:707px" width="12" height="12" viewBox="0 0 12 12"><circle cx="6" cy="6" r="4.2" fill="#fff"/><path d="M2.11 9.89 A5.5 5.5 0 0 1 9.89 2.11" stroke="#808080" fill="none" stroke-width="1"/><path d="M2.82 9.18 A4.5 4.5 0 0 1 9.18 2.82" stroke="#404040" fill="none" stroke-width="1"/><path d="M2.11 9.89 A5.5 5.5 0 0 0 9.89 2.11" stroke="#fff" fill="none" stroke-width="1"/><path d="M2.82 9.18 A4.5 4.5 0 0 0 9.18 2.82" stroke="#D4D0C8" fill="none" stroke-width="1"/></svg>
<div class="t" style="left:930px;top:707px;letter-spacing:-0.2px;">B</div>
<svg style="left:985px;top:707px" width="12" height="12" viewBox="0 0 12 12"><circle cx="6" cy="6" r="4.2" fill="#fff"/><path d="M2.11 9.89 A5.5 5.5 0 0 1 9.89 2.11" stroke="#808080" fill="none" stroke-width="1"/><path d="M2.82 9.18 A4.5 4.5 0 0 1 9.18 2.82" stroke="#404040" fill="none" stroke-width="1"/><path d="M2.11 9.89 A5.5 5.5 0 0 0 9.89 2.11" stroke="#fff" fill="none" stroke-width="1"/><path d="M2.82 9.18 A4.5 4.5 0 0 0 9.18 2.82" stroke="#D4D0C8" fill="none" stroke-width="1"/></svg>
<div class="t" style="left:999px;top:707px;letter-spacing:-0.2px;">C</div>
<div style="left:673px;top:743px;width:404px;height:100px;border:1px solid #fff;box-sizing:border-box"></div>
<div style="left:672px;top:742px;width:404px;height:100px;border:1px solid #808080;box-sizing:border-box"></div>
<div class="t" style="left:679px;top:736px;padding:0 2px;background:#D4D0C8;letter-spacing:-0.2px">Microphone Compensation</div>
<div style="left:785px;top:761px;width:13px;height:13px;background:#fff;box-shadow:inset 1px 1px #808080,inset -1px -1px #fff,inset 2px 2px #404040,inset -2px -2px #D4D0C8;"></div>
<div class="t" style="left:800px;top:761px;letter-spacing:-0.2px;">Enable Compensation</div>
<div style="left:689px;top:782px;width:54px;height:23px;background:#D4D0C8;box-shadow:inset -1px -1px #404040,inset 1px 1px #fff,inset -2px -2px #808080;"></div>
<div class="t" style="left:696px;top:787px;letter-spacing:-0.2px;">Select...</div>
<div style="left:689px;top:812px;width:54px;height:23px;background:#D4D0C8;box-shadow:inset -1px -1px #404040,inset 1px 1px #fff,inset -2px -2px #808080;"></div>
<div class="t" style="left:696px;top:817px;letter-spacing:-0.2px;">Select...</div>
<div class="t" style="left:740px;width:39px;text-align:right;top:787px;letter-spacing:-0.2px">Left:</div>
<div class="t" style="left:740px;width:39px;text-align:right;top:817px;letter-spacing:-0.2px">Right:</div>
<div style="left:785px;top:783px;width:276px;height:20px;background:#fff;box-shadow:inset 1px 1px #808080,inset -1px -1px #fff,inset 2px 2px #404040,inset -2px -2px #D4D0C8;"></div>
<div style="left:785px;top:814px;width:276px;height:20px;background:#fff;box-shadow:inset 1px 1px #808080,inset -1px -1px #fff,inset 2px 2px #404040,inset -2px -2px #D4D0C8;"></div>
<div style="left:1088px;top:578px;width:62px;height:23px;background:#000"></div>
<div style="left:1089px;top:579px;width:60px;height:21px;background:#D4D0C8;box-shadow:inset -1px -1px #404040,inset 1px 1px #fff,inset -2px -2px #808080;"></div>
<div class="t" style="left:1112px;top:582px;letter-spacing:-0.2px;">Ok</div>
<div style="left:1088px;top:609px;width:62px;height:23px;background:#D4D0C8;box-shadow:inset -1px -1px #404040,inset 1px 1px #fff,inset -2px -2px #808080;"></div>
<div class="t" style="left:1102px;top:613px;letter-spacing:-0.2px;">Cancel</div>
<div style="left:1088px;top:661px;width:62px;height:23px;background:#D4D0C8;box-shadow:inset -1px -1px #404040,inset 1px 1px #fff,inset -2px -2px #808080;"></div>
<div class="t" style="left:1099px;top:666px;letter-spacing:-0.2px;">Defaults</div>
<div style="left:1088px;top:697px;width:62px;height:23px;background:#D4D0C8;box-shadow:inset -1px -1px #404040,inset 1px 1px #fff,inset -2px -2px #808080;"></div>
<div class="t" style="left:1108px;top:702px;letter-spacing:-0.2px;">Help</div>
</body></html>
